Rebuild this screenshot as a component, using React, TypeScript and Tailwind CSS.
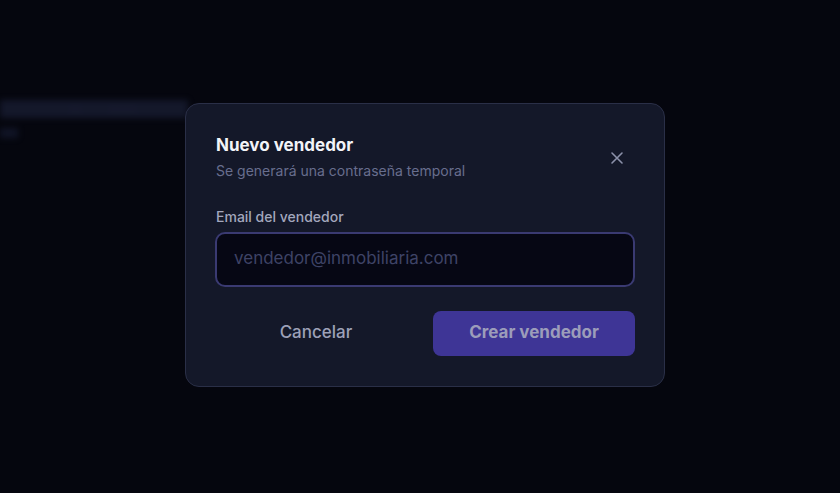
import React from "react";

export default function App() {
  return (
    <div
      className="relative w-[840px] h-[493px] overflow-hidden bg-[#05060e]"
      style={{ fontFamily: "Inter, 'Noto Sans', sans-serif" }}
    >
      {/* blurred page behind the overlay */}
      <div className="pt-[100px] flex flex-col gap-[10px] blur-[3px] opacity-90">
        <div className="h-[18px] w-[188px] bg-[#161a2e] flex items-center gap-3 pl-[70px]">
          <span className="text-[10px] text-[#3a4060] tracking-widest">···</span>
          <span className="text-[10px] text-[#3a4060] tracking-widest ml-4">·······</span>
        </div>
        <div className="h-[10px] w-[18px] bg-[#121629]" />
      </div>

      {/* modal overlay */}
      <div className="absolute inset-0 flex items-center justify-center pl-[10px] pb-[4px]">
        <div className="w-[480px] rounded-[14px] border border-[#2a2f47] bg-[#141829] px-[29px] pt-[29px] pb-[30px]">
          <div className="flex items-start justify-between">
            <div className="pl-[1px]">
              <h2 className="text-[17px] leading-[24px] font-bold text-[#f3f4f8]">Nuevo vendedor</h2>
              <p className="mt-[4px] text-[14px] leading-[20px] text-[#686e8e]">
                Se generará una contraseña temporal
              </p>
            </div>
            <button className="mt-[13px] mr-[6px] w-[24px] h-[24px] flex items-center justify-center text-[#8c91aa]">
              <svg width="14" height="14" viewBox="0 0 14 14" fill="none" stroke="currentColor" strokeWidth="1.6" strokeLinecap="round">
                <path d="M2 2L12 12M12 2L2 12" />
              </svg>
            </button>
          </div>

          <label className="block mt-[26px] pl-[1px] text-[14px] leading-[20px] font-medium text-[#a3a7bd]">
            Email del vendedor
          </label>
          <div className="mt-[5px] h-[55px] rounded-[10px] border-2 border-[#3a3a72] bg-[#060714] flex items-center px-[17px]">
            <span className="text-[17px] text-[#3e4366]">vendedor@inmobiliaria.com</span>
          </div>

          <div className="mt-[24px] grid grid-cols-2 gap-4">
            <button className="h-[45px] rounded-[8px] text-[17px] font-medium text-[#9da1b8]">Cancelar</button>
            <button className="h-[45px] rounded-[8px] bg-[#3e3596] text-[17px] font-bold text-[#9c9dba]">
              Crear vendedor
            </button>
          </div>
        </div>
      </div>
    </div>
  );
}
